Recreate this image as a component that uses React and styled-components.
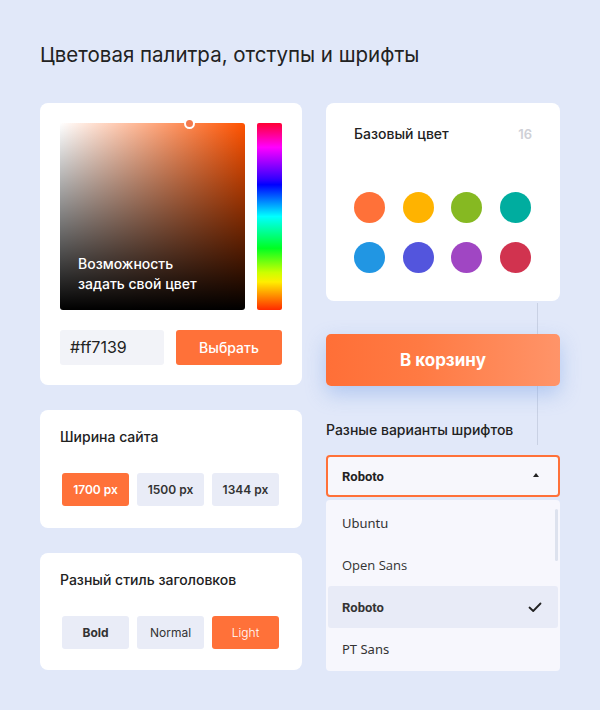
import React from 'react';
import styled, { createGlobalStyle, css } from 'styled-components';

const GlobalStyle = createGlobalStyle`
  html, body {
    margin: 0;
    padding: 0;
    background: #e1e8f9;
  }
  body {
    font-family: Inter, "Noto Sans", sans-serif;
    color: #222;
  }
  * { box-sizing: border-box; }
`;

const ORANGE = '#ff7139';

/* page layout */
const Page = styled.div`
  width: 600px;
  height: 710px;
  padding: 40px 40px 0 40px;
  overflow: hidden;
`;

const Title = styled.h1`
  margin: 0 0 33px 0;
  font-size: 20.5px;
  font-weight: 400;
  line-height: 30px;
  color: #222;
`;

const Columns = styled.div`
  display: grid;
  grid-template-columns: 262px 234px;
  column-gap: 24px;
`;

const Column = styled.div`
  display: flex;
  flex-direction: column;
  gap: 25px;
`;

const RightColumn = styled.div`
  position: relative;
  display: flex;
  flex-direction: column;

  &::before {
    content: '';
    position: absolute;
    left: 211px;
    top: 200px;
    width: 1px;
    height: 142px;
    background: #c9d1e4;
  }
`;

const Card = styled.div`
  background: #fff;
  border-radius: 8px;
  padding: ${(p) => p.$pad || '20px'};
`;

const CardTitle = styled.div`
  font-size: 14px;
  font-weight: 500;
  line-height: 20px;
  color: #222;
`;

/* color picker */
const PickerRow = styled.div`
  display: flex;
  gap: 12px;
`;

const SatBox = styled.div`
  position: relative;
  width: 185px;
  height: 187px;
  border-radius: 3px;
  background:
    linear-gradient(to bottom, rgba(0,0,0,0) 0%, #000 100%),
    linear-gradient(to right, #fff 0%, #ff5200 100%);
  display: flex;
  align-items: flex-end;
  padding: 0 18px 16px 18px;
`;

const Marker = styled.span`
  position: absolute;
  top: -5px;
  left: 124px;
  width: 11px;
  height: 11px;
  border-radius: 50%;
  border: 2px solid #fff;
  background: #f47a4d;
`;

const SatText = styled.div`
  color: #fff;
  font-size: 14px;
  font-weight: 500;
  line-height: 20px;
`;

const HueBar = styled.div`
  width: 25px;
  height: 187px;
  border-radius: 2px;
  background: linear-gradient(
    to bottom,
    #ff0033 0%,
    #ff00ff 13%,
    #3300ff 30%,
    #0000ff 33%,
    #00ffff 50%,
    #00ff22 67%,
    #ccff00 80%,
    #ffee00 85%,
    #ff2a00 100%
  );
`;

const InputRow = styled.div`
  display: flex;
  gap: 12px;
  margin-top: 20px;
`;

const HexInput = styled.div`
  width: 104px;
  height: 35px;
  border-radius: 3px;
  background: #f2f3f8;
  font-size: 16px;
  line-height: 35px;
  padding-left: 10px;
  color: #222;
`;

const SelectButton = styled.div`
  flex: 1;
  height: 35px;
  border-radius: 3px;
  background: ${ORANGE};
  color: #fff;
  font-size: 14px;
  font-weight: 500;
  display: flex;
  align-items: center;
  justify-content: center;
`;

/* option buttons */
const OptionRow = styled.div`
  display: flex;
  gap: 8px;
  margin-top: 26px;
  padding-left: 2px;
`;

const Option = styled.div`
  width: 67px;
  height: 33px;
  border-radius: 3px;
  display: flex;
  align-items: center;
  justify-content: center;
  font-size: 12px;
  font-weight: ${(p) => p.$weight || 600};
  background: #e9ecf7;
  color: #333;
  ${(p) => p.$active && css`
    background: ${ORANGE};
    color: #fff;
  `}
`;

/* base colours */
const ColorHeader = styled.div`
  display: flex;
  justify-content: space-between;
  align-items: center;
`;

const Count = styled.span`
  font-size: 13px;
  font-weight: 600;
  color: #cfd0d6;
`;

const Swatches = styled.div`
  display: grid;
  grid-template-columns: repeat(4, 31px);
  column-gap: 17.5px;
  row-gap: 19px;
  margin-top: 48px;
`;

const Swatch = styled.span`
  width: 31px;
  height: 31px;
  border-radius: 50%;
  background: ${(p) => p.$color};
`;

const CartButton = styled.div`
  margin-top: 33px;
  height: 52px;
  border-radius: 5px;
  background: linear-gradient(to right, #ff6f37 0%, #ff7a43 40%, #ff9469 100%);
  box-shadow: 0 8px 20px rgba(120, 160, 230, 0.45);
  color: #fff;
  font-size: 17px;
  font-weight: 700;
  display: flex;
  align-items: center;
  justify-content: center;
  position: relative;
  z-index: 1;
`;

const FontLabel = styled.div`
  margin-top: 34px;
  font-size: 14px;
  font-weight: 500;
  line-height: 20px;
`;

const Select = styled.div`
  margin-top: 15px;
  height: 42px;
  border: 2px solid ${ORANGE};
  border-radius: 4px;
  background: #f7f7fc;
  display: flex;
  align-items: center;
  justify-content: space-between;
  padding: 0 19px 0 14px;
  font-family: Roboto, sans-serif;
  font-weight: 700;
  font-size: 13px;
  color: #222;
`;

const Caret = styled.span`
  width: 0;
  height: 0;
  border-left: 3.5px solid transparent;
  border-right: 3.5px solid transparent;
  border-bottom: 4px solid #222;
  margin-top: -2px;
`;

const List = styled.div`
  position: relative;
  margin-top: 3px;
  background: #f7f7fd;
  border-radius: 4px;
  padding: 2px 2px 0 2px;
  height: 171px;
  overflow: hidden;
`;

const Scroll = styled.span`
  position: absolute;
  right: 2px;
  top: 9px;
  width: 3px;
  height: 52px;
  border-radius: 2px;
  background: #dde2ee;
`;

const Item = styled.div`
  height: 42px;
  border-radius: 3px;
  display: flex;
  align-items: center;
  justify-content: space-between;
  padding: 0 16px 0 14px;
  font-size: 13px;
  color: #333;
  font-family: ${(p) => p.$font};
  font-weight: ${(p) => (p.$selected ? 700 : 400)};
  background: ${(p) => (p.$selected ? '#e8ebf7' : 'transparent')};
`;

const swatchColors = [
  '#ff7139', '#ffb300', '#86b922', '#00ad9f',
  '#2196e3', '#5355dd', '#a046c3', '#d1334f',
];

const fonts = [
  { name: 'Ubuntu', font: '"Noto Sans", sans-serif' },
  { name: 'Open Sans', font: '"Open Sans", sans-serif' },
  { name: 'Roboto', font: 'Roboto, sans-serif', selected: true },
  { name: 'PT Sans', font: '"Noto Sans", sans-serif' },
];

function Check() {
  return (
    <svg width="14" height="11" viewBox="0 0 14 11" fill="none">
      <path d="M1.5 5.5 L5.2 9 L12.5 1.5" stroke="#222" strokeWidth="1.8" strokeLinecap="round" strokeLinejoin="round" />
    </svg>
  );
}

export default function App() {
  return (
    <Page>
      <GlobalStyle />
      <Title>Цветовая палитра, отступы и шрифты</Title>
      <Columns>
        <Column>
          <Card>
            <PickerRow>
              <SatBox>
                <Marker />
                <SatText>Возможность<br />задать свой цвет</SatText>
              </SatBox>
              <HueBar />
            </PickerRow>
            <InputRow>
              <HexInput>#ff7139</HexInput>
              <SelectButton>Выбрать</SelectButton>
            </InputRow>
          </Card>

          <Card $pad="17px 20px 22px 20px">
            <CardTitle>Ширина сайта</CardTitle>
            <OptionRow>
              <Option $active>1700 px</Option>
              <Option>1500 px</Option>
              <Option>1344 px</Option>
            </OptionRow>
          </Card>

          <Card $pad="17px 20px 21px 20px">
            <CardTitle>Разный стиль заголовков</CardTitle>
            <OptionRow>
              <Option $weight={700}>Bold</Option>
              <Option $weight={400}>Normal</Option>
              <Option $weight={300} $active>Light</Option>
            </OptionRow>
          </Card>
        </Column>

        <RightColumn>
          <Card $pad="21px 28px 28px 28px">
            <ColorHeader>
              <CardTitle>Базовый цвет</CardTitle>
              <Count>16</Count>
            </ColorHeader>
            <Swatches>
              {swatchColors.map((c) => (
                <Swatch key={c} $color={c} />
              ))}
            </Swatches>
          </Card>

          <CartButton>В корзину</CartButton>

          <FontLabel>Разные варианты шрифтов</FontLabel>
          <Select>
            Roboto
            <Caret />
          </Select>
          <List>
            <Scroll />
            {fonts.map((f) => (
              <Item key={f.name} $font={f.font} $selected={f.selected}>
                {f.name}
                {f.selected && <Check />}
              </Item>
            ))}
          </List>
        </RightColumn>
      </Columns>
    </Page>
  );
}
